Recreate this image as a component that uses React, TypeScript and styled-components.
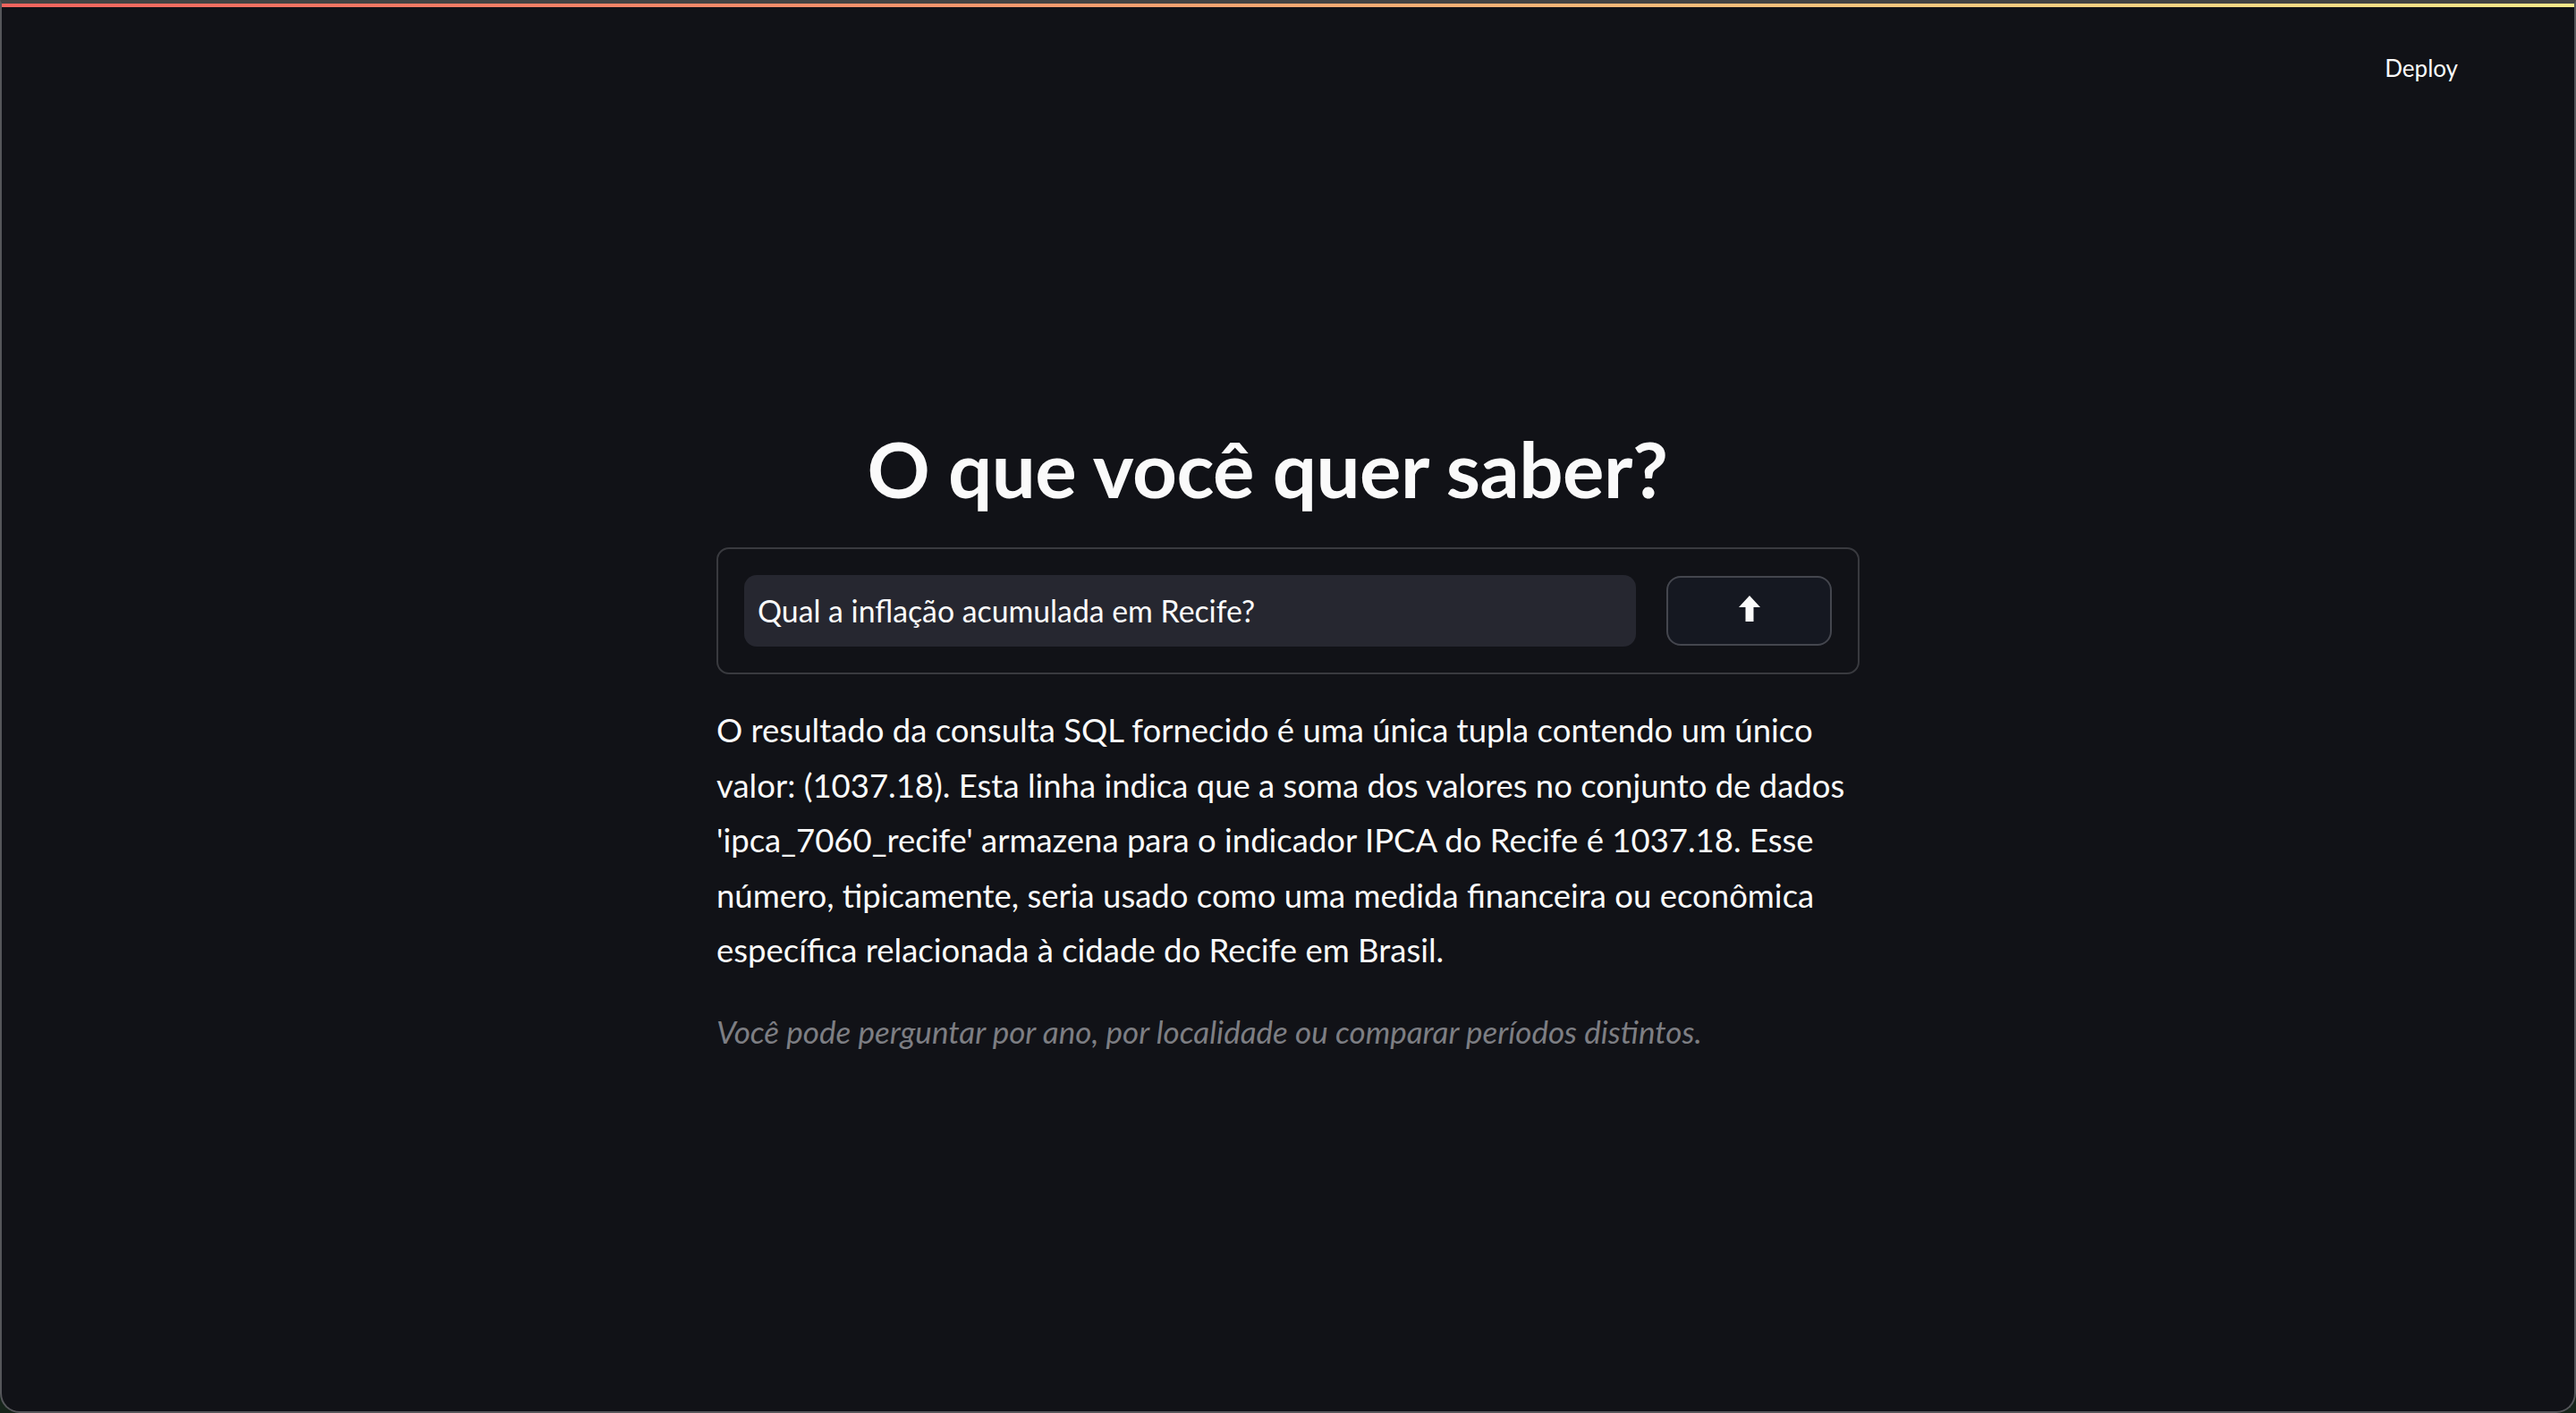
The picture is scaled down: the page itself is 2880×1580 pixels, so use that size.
import React from "react";
import styled, { createGlobalStyle } from "styled-components";

const GlobalStyle = createGlobalStyle`
  html, body {
    margin: 0;
    padding: 0;
    background: #16241a;
  }
  body {
    font-family: Lato, "Noto Sans", sans-serif;
    overflow: hidden;
  }
  * { box-sizing: border-box; }
`;

const Window = styled.div`
  width: 2880px;
  height: 1580px;
  background: #111217;
  border-top: 4px solid #434343;
  border-left: 2px solid #55565a;
  border-right: 2px solid #55565a;
  border-bottom: 2px solid #55565a;
  border-radius: 0 0 22px 22px;
  overflow: hidden;
  display: flex;
  flex-direction: column;
`;

const Decoration = styled.div`
  height: 4px;
  flex: none;
  background: linear-gradient(90deg, #f2645e 0%, #f7a872 50%, #f9e88a 100%);
`;

const Header = styled.header`
  display: flex;
  justify-content: flex-end;
  padding: 48px 130px 0 0;
  flex: none;
`;

const DeployButton = styled.button`
  background: transparent;
  border: none;
  padding: 0;
  height: 40px;
  color: #fafafa;
  font-family: Lato, "Noto Sans", sans-serif;
  font-size: 26px;
  line-height: 40px;
  cursor: pointer;
`;

const Main = styled.main`
  width: 1278px;
  margin: 0 auto;
  padding-top: 376px;
  display: flex;
  flex-direction: column;
`;

const Title = styled.h1`
  margin: 0 0 36px;
  padding-right: 46px;
  text-align: center;
  color: #fafafa;
  font-family: Lato, "Noto Sans", sans-serif;
  font-weight: 700;
  font-size: 87px;
  line-height: 104px;
  letter-spacing: -0.5px;
`;

const Form = styled.form`
  display: flex;
  align-items: center;
  gap: 34px;
  padding: 29px;
  border: 2px solid #393a3f;
  border-radius: 14px;
`;

const Input = styled.input`
  flex: 1;
  height: 80px;
  min-width: 0;
  background: #262730;
  border: none;
  border-radius: 14px;
  padding: 0 15px;
  color: #fafafa;
  font-family: Lato, "Noto Sans", sans-serif;
  font-size: 33.8px;
  outline: none;
`;

const SubmitButton = styled.button`
  flex: none;
  width: 185px;
  height: 78px;
  background: #151821;
  border: 2px solid #44464e;
  border-radius: 16px;
  display: flex;
  align-items: center;
  justify-content: center;
  padding: 0 0 5px;
  cursor: pointer;
`;

const Answer = styled.p`
  margin: 32px 0 0;
  color: #fafafa;
  font-family: Lato, "Noto Sans", sans-serif;
  font-size: 36.5px;
  line-height: 61.5px;
`;

const Hint = styled.p`
  margin: 31px 0 0;
  color: #7d7e83;
  font-family: Lato, "Noto Sans", sans-serif;
  font-style: italic;
  font-size: 35px;
  line-height: 56px;
`;

const ArrowUp = () => (
  <svg width="24" height="29" viewBox="0 0 24 29" aria-hidden="true">
    <polygon
      points="12,0 24,13 16.5,13 16.5,29 7.5,29 7.5,13 0,13"
      fill="#fafafa"
    />
  </svg>
);

const answerLines = [
  "O resultado da consulta SQL fornecido é uma única tupla contendo um único",
  "valor: (1037.18). Esta linha indica que a soma dos valores no conjunto de dados",
  "'ipca_7060_recife' armazena para o indicador IPCA do Recife é 1037.18. Esse",
  "número, tipicamente, seria usado como uma medida financeira ou econômica",
  "específica relacionada à cidade do Recife em Brasil.",
];

export default function App() {
  return (
    <>
      <GlobalStyle />
      <Window>
        <Decoration />
        <Header>
          <DeployButton type="button">Deploy</DeployButton>
        </Header>
        <Main>
          <Title>O que você quer saber?</Title>
          <Form onSubmit={(e) => e.preventDefault()}>
            <Input defaultValue="Qual a inflação acumulada em Recife?" />
            <SubmitButton type="submit" aria-label="Enviar">
              <ArrowUp />
            </SubmitButton>
          </Form>
          <Answer>
            {answerLines.map((line, i) => (
              <React.Fragment key={i}>
                {line}
                {i < answerLines.length - 1 && <br />}
              </React.Fragment>
            ))}
          </Answer>
          <Hint>Você pode perguntar por ano, por localidade ou comparar períodos distintos.</Hint>
        </Main>
      </Window>
    </>
  );
}
